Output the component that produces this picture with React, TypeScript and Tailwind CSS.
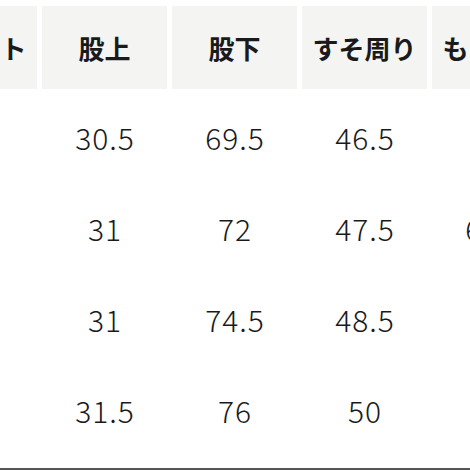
const headers = ['ウエスト', '股上', '股下', 'すそ周り', 'もも周り'];

const rows = [
  ['76', '30.5', '69.5', '46.5', '62'],
  ['79', '31', '72', '47.5', '63.5'],
  ['82', '31', '74.5', '48.5', '65'],
  ['85', '31.5', '76', '50', '66'],
];

export default function App() {
  return (
    <div
      className="w-[470px] h-[470px] overflow-hidden bg-white flex flex-col text-[#1a1a1a]"
      style={{ fontFamily: '"Noto Sans CJK JP", "Noto Sans", sans-serif' }}
    >
      <div className="ml-[-88px] mt-[6px] grid grid-cols-[repeat(5,125px)] gap-x-[5px]">
        {headers.map((h) => (
          <div
            key={h}
            className="h-[83px] bg-[#f4f4f2] flex items-center justify-center text-[26px] font-bold whitespace-nowrap"
          >
            {h}
          </div>
        ))}
      </div>
      <div className="ml-[-88px] mt-[3px] grid grid-cols-[repeat(5,125px)] gap-x-[5px]">
        {rows.map((r, i) =>
          r.map((v, j) => (
            <div
              key={`${i}-${j}`}
              className="h-[91px] flex items-center justify-center pl-[1px] text-[30px] font-light tracking-[1px] whitespace-nowrap"
            >
              {v}
            </div>
          ))
        )}
      </div>
      <div className="mt-auto h-[2px] bg-[#555]" />
    </div>
  );
}
